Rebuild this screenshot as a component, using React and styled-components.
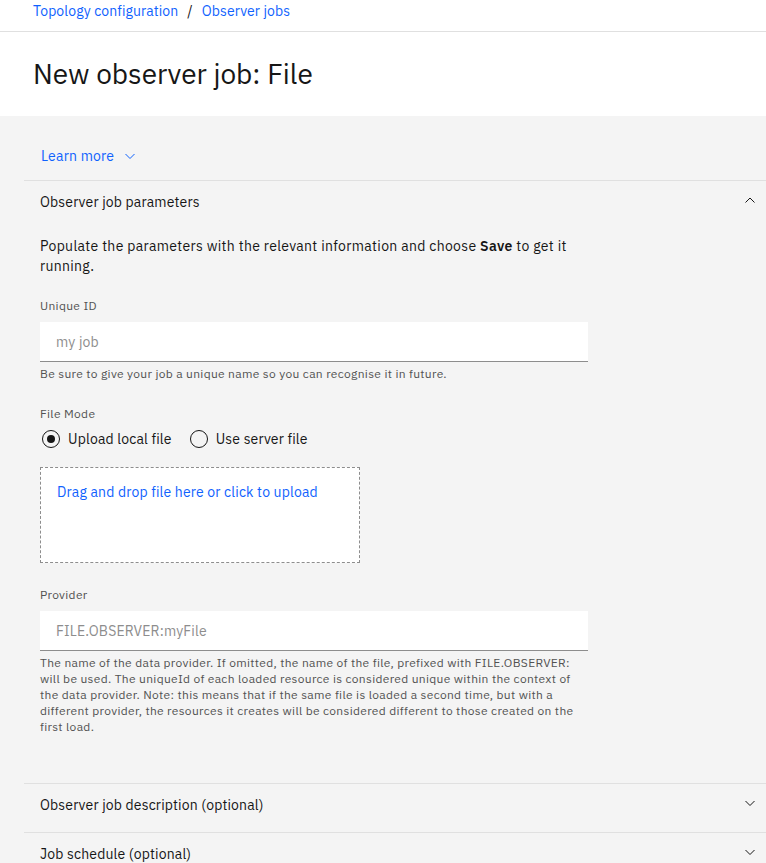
import styled, { createGlobalStyle } from "styled-components";

const GlobalStyle = createGlobalStyle`
  html, body {
    margin: 0;
    padding: 0;
    background: #f4f4f4;
  }
  body {
    font-family: "IBM Plex Sans", Inter, "Noto Sans", sans-serif;
    color: #161616;
  }
  * { box-sizing: border-box; }
`;

const TopBand = styled.div`
  background: #ffffff;
`;

const Breadcrumb = styled.nav`
  height: 32px;
  padding: 1px 0 0 33px;
  border-bottom: 1px solid #e0e0e0;
  font-size: 14px;
  line-height: 20px;
  letter-spacing: 0.1px;
  display: flex;
  gap: 9px;
`;

const Crumb = styled.a`
  color: #0f62fe;
  text-decoration: none;
`;

const Slash = styled.span`
  color: #161616;
`;

const Title = styled.h1`
  margin: 0;
  padding: 24px 0 24px 33px;
  font-size: 28px;
  line-height: 36px;
  font-weight: 400;
`;

const Body = styled.main`
  padding: 16px 0 0 24px;
`;

const LearnMore = styled.button`
  height: 48px;
  padding: 0 0 0 17px;
  background: none;
  border: 0;
  font: inherit;
  font-size: 14px;
  letter-spacing: 0.2px;
  color: #0f62fe;
  display: flex;
  align-items: center;
  gap: 8px;
`;

const Item = styled.section`
  border-top: 1px solid #e0e0e0;
`;

const Heading = styled.div`
  height: 48px;
  padding: 11px 8px 0 16px;
  display: flex;
  justify-content: space-between;
  font-size: 14px;
  line-height: 20px;
  letter-spacing: 0.16px;
`;

const Content = styled.div`
  padding: 7px 0 24px 16px;
  width: 564px;
`;

const Intro = styled.p`
  margin: 0 0 22px;
  font-size: 14px;
  line-height: 20px;
  letter-spacing: 0.32px;
`;

const FormItem = styled.div`
  margin-bottom: 24px;
`;

const Label = styled.div`
  font-size: 12px;
  line-height: 16px;
  color: #525252;
  margin-bottom: ${(p) => p.$gap ?? 8}px;
  letter-spacing: 0.32px;
`;

const Input = styled.div`
  height: 40px;
  background: #ffffff;
  border-bottom: 1px solid #8d8d8d;
  padding: 0 16px;
  display: flex;
  align-items: center;
  font-size: 14px;
  letter-spacing: 0.16px;
  color: #8d8d8d;
`;

const Helper = styled.div`
  margin-top: 4px;
  font-size: 12px;
  line-height: 16px;
  color: #525252;
  letter-spacing: 0.32px;
  padding-right: ${(p) => p.$pad || 0}px;
`;

const RadioRow = styled.div`
  display: flex;
  gap: 16px;
  margin-bottom: 18px;
`;

const Radio = styled.label`
  display: flex;
  align-items: center;
  gap: 8px;
  font-size: 14px;
  line-height: 20px;
  letter-spacing: 0.16px;
  padding-left: 2px;
`;

const Circle = styled.span`
  width: 18px;
  height: 18px;
  border: 1px solid #161616;
  border-radius: 50%;
  display: flex;
  align-items: center;
  justify-content: center;
  &::after {
    content: "";
    width: 8px;
    height: 8px;
    border-radius: 50%;
    background: ${(p) => (p.$checked ? "#161616" : "transparent")};
  }
`;

const DropZone = styled.div`
  width: 320px;
  height: 96px;
  background: #ffffff;
  border: 1px dashed #8d8d8d;
  padding: 14px 16px;
  font-size: 14px;
  line-height: 20px;
  letter-spacing: 0.16px;
  color: #0f62fe;
  margin-bottom: 24px;
`;

const Chevron = ({ up }) => (
  <svg width="16" height="16" viewBox="0 0 16 16" fill="none">
    <polyline
      points={up ? "3.5,10.5 8,6 12.5,10.5" : "3.5,6 8,10.5 12.5,6"}
      stroke="#161616"
      strokeWidth="1"
    />
  </svg>
);

const BlueChevron = () => (
  <svg width="16" height="16" viewBox="0 0 16 16" fill="none">
    <polyline points="3.5,6 8,10.5 12.5,6" stroke="#0f62fe" strokeWidth="1" />
  </svg>
);

const App = () => {
  return (
    <>
      <GlobalStyle />
      <TopBand>
        <Breadcrumb>
          <Crumb href="#">Topology configuration</Crumb>
          <Slash>/</Slash>
          <Crumb href="#">Observer jobs</Crumb>
        </Breadcrumb>
        <Title>New observer job: File</Title>
      </TopBand>
      <Body>
        <LearnMore>
          Learn more <BlueChevron />
        </LearnMore>
        <Item>
          <Heading>
            <span>Observer job parameters</span>
            <Chevron up />
          </Heading>
          <Content>
            <Intro>
              Populate the parameters with the relevant information and choose{" "}
              <strong style={{ fontWeight: 600 }}>Save</strong> to get it running.
            </Intro>
            <FormItem>
              <Label>Unique ID</Label>
              <Input>my job</Input>
              <Helper>
                Be sure to give your job a unique name so you can recognise it in
                future.
              </Helper>
            </FormItem>
            <Label $gap={7}>File Mode</Label>
            <RadioRow>
              <Radio>
                <Circle $checked /> Upload local file
              </Radio>
              <Radio>
                <Circle /> Use server file
              </Radio>
            </RadioRow>
            <DropZone>Drag and drop file here or click to upload</DropZone>
            <FormItem>
              <Label>Provider</Label>
              <Input>FILE.OBSERVER:myFile</Input>
              <Helper $pad={10}>
                The name of the data provider. If omitted, the name of the file,
                prefixed with FILE.OBSERVER: will be used. The uniqueId of each
                loaded resource is considered unique within the context of the
                data provider. Note: this means that if the same file is loaded a
                second time, but with a different provider, the resources it
                creates will be considered different to those created on the first
                load.
              </Helper>
            </FormItem>
          </Content>
        </Item>
        <Item>
          <Heading>
            <span>Observer job description (optional)</span>
            <Chevron />
          </Heading>
        </Item>
        <Item>
          <Heading>
            <span>Job schedule (optional)</span>
            <Chevron />
          </Heading>
        </Item>
      </Body>
    </>
  );
};

export default App;
